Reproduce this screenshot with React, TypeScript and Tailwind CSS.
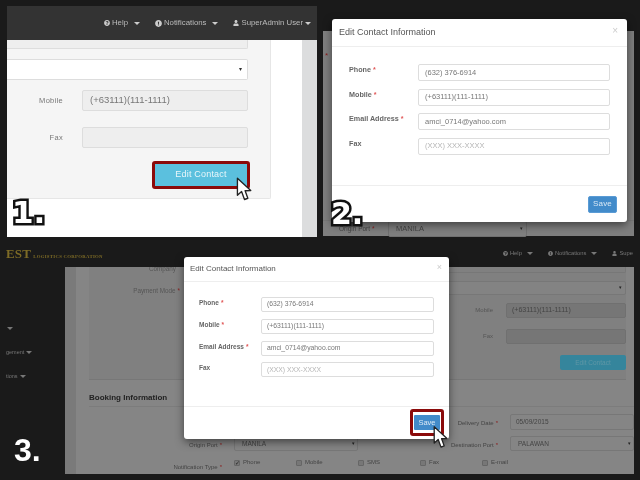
import React from "react";
import { FaQuestionCircle, FaExclamationCircle, FaUser } from "react-icons/fa";

const Caret = ({ c = "border-t-[#ccc]" }: { c?: string }) => (
  <span className={`inline-block w-0 h-0 border-x-[3px] border-t-[3px] border-x-transparent ${c}`} />
);
const Cursor = ({ className }: { className: string }) => (
  <svg viewBox="0 0 16 24" className={className}>
    <path d="M1.2 1.2 L1.2 17.6 L5.2 14 L8 21.6 L11.2 20.4 L8.6 13.2 L14 13 Z" fill="#fff" stroke="#222" strokeWidth="1.3" strokeLinejoin="round" />
  </svg>
);
const Star = ({ c = "text-[#c33]" }: { c?: string }) => <span className={`${c} ml-[2px] align-top`}>*</span>;

const outlined = "absolute font-['DejaVu_Sans'] font-bold text-white [-webkit-text-stroke:5px_#111] [paint-order:stroke_fill] leading-none";

const Field = ({ label, star, value, ph, row, input, lab }: { label: string; star?: boolean; value: string; ph?: boolean; row: string; input: string; lab: string }) => (
  <div className={`flex ${row}`}>
    <div className={`${lab} font-bold text-[#666] whitespace-nowrap`}>
      {label}
      {star && <Star c="text-[#e05555]" />}
    </div>
    <div className={`${input} border border-[#ddd] rounded-[2px] bg-white flex items-center ${ph ? "text-[#b5b5b5]" : "text-[#777]"}`}>{value}</div>
  </div>
);

const fields = [
  { label: "Phone", star: true, value: "(632) 376-6914" },
  { label: "Mobile", star: true, value: "(+63111)(111-1111)" },
  { label: "Email Address", star: true, value: "amci_0714@yahoo.com" },
  { label: "Fax", value: "(XXX) XXX-XXXX", ph: true },
];

const Panel1 = () => (
  <div className="absolute left-[7px] top-[6px] w-[310px] h-[231px] flex flex-col bg-white">
    <div className="h-[34px] bg-[#333] flex items-center justify-end gap-[15px] pr-[6px] text-[7.8px] text-[#bbb] shrink-0">
      <span className="flex items-center gap-[2px]"><FaQuestionCircle className="w-[6px] h-[6px] text-[#ccc]" />Help<span className="w-[2px]" /><Caret /></span>
      <span className="flex items-center gap-[2px]"><FaExclamationCircle className="w-[7px] h-[7px] text-[#ccc]" />Notifications<span className="w-[2px]" /><Caret /></span>
      <span className="flex items-center gap-[2px]"><FaUser className="w-[6px] h-[6px] text-[#ccc]" />SuperAdmin User<Caret /></span>
    </div>
    <div className="flex-1 flex">
      <div className="w-[295px] flex flex-col">
        <div className="w-[264px] h-[159px] bg-[#f5f5f5] border-b border-r border-[#e6e6e6] rounded-br-[2px] flex flex-col items-end pr-[22px]">
          <div className="w-[241px] h-[9px] bg-[#eee] border-r border-b border-[#ddd] rounded-br-[2px]" />
          <div className="w-[241px] h-[21px] mt-[10px] bg-white border-y border-r border-[#ddd] rounded-r-[2px] flex items-center justify-end pr-[5px] text-[6px] text-[#333]">▾</div>
          {[["Mobile", "(+63111)(111-1111)", "mt-[10px]"], ["Fax", "", "mt-[16px]"]].map(([l, v, m]) => (
            <div key={l} className={`flex items-center ${m}`}>
              <span className="text-[7.5px] text-[#777] tracking-[0.3px] mr-[19px]">{l}</span>
              <div className="w-[166px] h-[21px] bg-[#eee] border border-[#ddd] rounded-[2px] flex items-center pl-[7px] text-[9.5px] text-[#777]">{v}</div>
            </div>
          ))}
          <div className="relative mt-[13px] -mr-[2px] w-[98px] h-[28px] bg-[#5bc0de] border-[3px] border-[#8b0a0a] rounded-[3px] flex items-center justify-center text-[9px] text-[#e8f6fa] tracking-[0.2px]">
            Edit Contact
          </div>
        </div>
      </div>
      <div className="flex-1 bg-[#dcddde]" />
    </div>
    <Cursor className="absolute left-[229px] top-[171px] w-[17px] h-[25px]" />
    <span className={`${outlined} left-[5px] top-[191px] text-[31px]`}>1.</span>
  </div>
);

const Panel2 = () => (
  <div className="absolute left-[323px] top-[31px] w-[311px] h-[205px] bg-[#7f7f7f] flex flex-col justify-end">
    <span className="absolute left-[2px] top-[19px] text-[8px] text-[#8b1a1a]">*</span>
    <div className="h-[16px] flex items-center border-t border-[#777] relative text-[6.5px] text-[#444] pl-[16px]">
      <span className="w-[49px] whitespace-nowrap">Origin Port<Star c="text-[#8b1a1a]" /></span>
      <div className="w-[139px] h-[16px] border border-[#707070] rounded-[2px] flex items-center justify-between pl-[7px] pr-[3px] text-[7.5px]">MANILA<span className="text-[5px] text-[#222]">▾</span></div>
    </div>
    <div className="absolute left-[9px] top-[-12px] w-[295px] h-[203px] bg-white rounded-[3px] shadow-[0_3px_9px_rgba(0,0,0,0.5)] flex flex-col">
      <div className="h-[28px] border-b border-[#eee] flex items-center justify-between pl-[7px] pr-[9px] text-[9px] text-[#555] shrink-0">
        <span>Edit Contact Information</span><span className="text-[#ccc] text-[10px] -mt-[4px]">×</span>
      </div>
      <div className="flex-1 pt-[17px] pl-[17px] text-[7.2px]">
        {fields.map((f) => (
          <Field key={f.label} {...f} row="mb-[7.5px]" lab="w-[69px] pt-[1px]" input="w-[192px] h-[17px] pl-[6px] text-[7.5px]" />
        ))}
      </div>
      <div className="h-[37px] border-t border-[#eee] flex items-center justify-end pr-[10px] shrink-0">
        <div className="w-[29px] h-[17px] bg-[#428bca] border border-[#5a9bd5] rounded-[2px] flex items-center justify-center text-[8px] text-[#d9e8f5] tracking-[0.2px]">Save</div>
      </div>
    </div>
    <span className={`${outlined} left-[8px] top-[168px] text-[30px]`}>2.</span>
  </div>
);

const Check = ({ on, label }: { on?: boolean; label: string }) => (
  <span className="flex items-center gap-[3px] w-[62px]">
    <span className="w-[6px] h-[6px] rounded-[1px] border border-[#666] bg-[#777] flex items-center justify-center text-[6px] text-[#222] leading-none">{on ? "✓" : ""}</span>
    {label}
  </span>
);

const Panel3 = () => (
  <div className="absolute left-0 top-[240px] w-[640px] h-[234px] flex flex-col">
    <div className="h-[27px] flex items-center justify-between pl-[6px] pr-[7px] shrink-0">
      <div className="flex items-baseline font-['Liberation_Serif'] text-[#7d6b26] whitespace-nowrap">
        <span className="text-[13px] font-bold tracking-[0.2px]">EST</span>
        <span className="text-[4.8px] font-bold ml-[2px] tracking-[0.28px]">LOGISTICS CORPORATION</span>
      </div>
      <div className="flex items-center gap-[15px] text-[5.8px] text-[#777]">
        <span className="flex items-center gap-[2px]"><FaQuestionCircle className="w-[5px] h-[5px]" />Help<span className="w-[1px]" /><Caret c="border-t-[#777]" /></span>
        <span className="flex items-center gap-[2px]"><FaExclamationCircle className="w-[5px] h-[5px]" />Notifications<span className="w-[1px]" /><Caret c="border-t-[#777]" /></span>
        <span className="flex items-center gap-[2px]"><FaUser className="w-[5px] h-[5px]" />Supe</span>
      </div>
    </div>
    <div className="flex-1 flex">
      <div className="w-[65px] pl-[6px] pt-[59px] flex flex-col gap-[19px] text-[5.5px] text-[#777] shrink-0">
        <span className="h-[5px] flex items-center gap-[2px] pl-[1px]"><Caret c="border-t-[#777]" /></span>
        <span className="h-[5px] flex items-center gap-[2px] whitespace-nowrap">gement <Caret c="border-t-[#777]" /></span>
        <span className="h-[5px] flex items-center gap-[2px] whitespace-nowrap">tions <Caret c="border-t-[#777]" /></span>
      </div>
      <div className="w-[11px] bg-[#7a7a7a] shrink-0" />
      <div className="w-[558px] bg-[#858585] overflow-hidden flex flex-col text-[#444]">
        <div className="ml-[13px] w-[537px] h-[113px] bg-[#808080] border-b border-[#777] flex">
          <div className="w-[300px] flex flex-col text-[6.3px] text-[#555]">
            <div className="w-[87px] text-right -mt-[3px]">Company</div>
            <div className="w-[91px] text-right mt-[13px] whitespace-nowrap">Payment Mode<Star c="text-[#8b1a1a]" /></div>
          </div>
          <div className="flex-1 flex flex-col items-end">
            <div className="w-[230px] h-[6px] border-x border-b border-[#777] rounded-b-[2px]" />
            <div className="w-[230px] h-[14px] mt-[8px] border border-[#777] bg-[#838383] rounded-[2px] flex items-center justify-end pr-[3px] text-[5px] text-[#222]">▾</div>
            {[["Mobile", "(+63111)(111-1111)", "mt-[8px]"], ["Fax", "", "mt-[11px]"]].map(([l, v, m]) => (
              <div key={l} className={`flex items-center ${m}`}>
                <span className="mr-[13px] text-[6px] text-[#555]">{l}</span>
                <div className="w-[120px] h-[15px] bg-[#767676] border border-[#707070] rounded-[2px] flex items-center pl-[5px] text-[7px] text-[#444]">{v}</div>
              </div>
            ))}
            <div className="w-[66px] h-[15px] mt-[11px] bg-[#35859c] rounded-[2px] flex items-center justify-center text-[6.5px] text-[#5f97a6]">Edit Contact</div>
          </div>
        </div>
        <div className="ml-[13px] w-[545px] flex flex-col flex-1">
          <div className="h-[26px] border-b border-[#7c7c7c] flex items-end pb-[2px] text-[8px] font-bold text-[#222] mt-[1px]">Booking Information</div>
          <div className="flex justify-end items-center mt-[7px] text-[6px] text-[#444]">
            <span className="mr-[12px] pt-[2px] whitespace-nowrap">Delivery Date<Star c="text-[#8b1a1a]" /></span>
            <div className="w-[124px] h-[16px] border border-[#777] rounded-[2px] flex items-center pl-[5px] text-[6.5px]">05/09/2015</div>
          </div>
          <div className="flex items-center mt-[6px] text-[6px] text-[#444]">
            <span className="w-[133px] pt-[4px] text-right whitespace-nowrap">Origin Port<Star c="text-[#8b1a1a]" /></span>
            <div className="ml-[12px] w-[124px] h-[15px] border border-[#777] rounded-[2px] flex items-center justify-between pl-[7px] pr-[2px] text-[6.5px]">MANILA<span className="text-[5px] text-[#222]">▾</span></div>
            <span className="w-[140px] pt-[4px] text-right whitespace-nowrap">Destination Port<Star c="text-[#8b1a1a]" /></span>
            <div className="ml-[12px] w-[124px] h-[15px] border border-[#777] rounded-[2px] flex items-center justify-between pl-[7px] pr-[2px] text-[6.5px]">PALAWAN<span className="text-[5px] text-[#222]">▾</span></div>
          </div>
          <div className="flex items-start mt-[7px] text-[6px] text-[#444]">
            <span className="w-[133px] text-right pt-[5px] whitespace-nowrap">Notification Type<Star c="text-[#8b1a1a]" /></span>
            <div className="flex ml-[12px]">
              <Check on label="Phone" />
              <Check label="Mobile" />
              <Check label="SMS" />
              <Check label="Fax" />
              <Check label="E-mail" />
            </div>
          </div>
        </div>
      </div>
    </div>
    <div className="absolute left-[184px] top-[17px] w-[265px] h-[182px] bg-white rounded-[3px] shadow-[0_3px_9px_rgba(0,0,0,0.5)] flex flex-col">
      <div className="h-[25px] border-b border-[#eee] flex items-center justify-between pl-[6px] pr-[7px] text-[8px] text-[#555] shrink-0">
        <span>Edit Contact Information</span><span className="text-[#ccc] text-[9px] -mt-[3px]">×</span>
      </div>
      <div className="flex-1 pt-[15px] pl-[15px] text-[6.5px]">
        {fields.map((f) => (
          <Field key={f.label} {...f} row="mb-[6.8px]" lab="w-[62px] pt-[1px]" input="w-[173px] h-[15px] pl-[5px] text-[6.8px]" />
        ))}
      </div>
      <div className="h-[33px] border-t border-[#eee] flex items-center justify-end pr-[5px] shrink-0">
        <div className="relative w-[34px] h-[27px] border-[3px] border-[#8b0a0a] rounded-[3px] bg-white flex items-center justify-center mt-[-1px]">
          <div className="w-[26px] h-[15px] bg-[#428bca] rounded-[1px] flex items-center justify-center text-[7.5px] text-[#d9e8f5]">Save</div>
        </div>
      </div>
    </div>
    <Cursor className="absolute left-[433px] top-[185px] w-[16px] h-[25px]" />
    <span className="absolute left-[14px] top-[194px] text-[32px] leading-none font-bold text-white">3.</span>
  </div>
);

export default function App() {
  return (
    <div className="relative w-[640px] h-[480px] bg-[#1a1a1a] overflow-hidden font-['Liberation_Sans'] blur-[0.5px]">
      <Panel1 />
      <Panel2 />
      <Panel3 />
    </div>
  );
}
